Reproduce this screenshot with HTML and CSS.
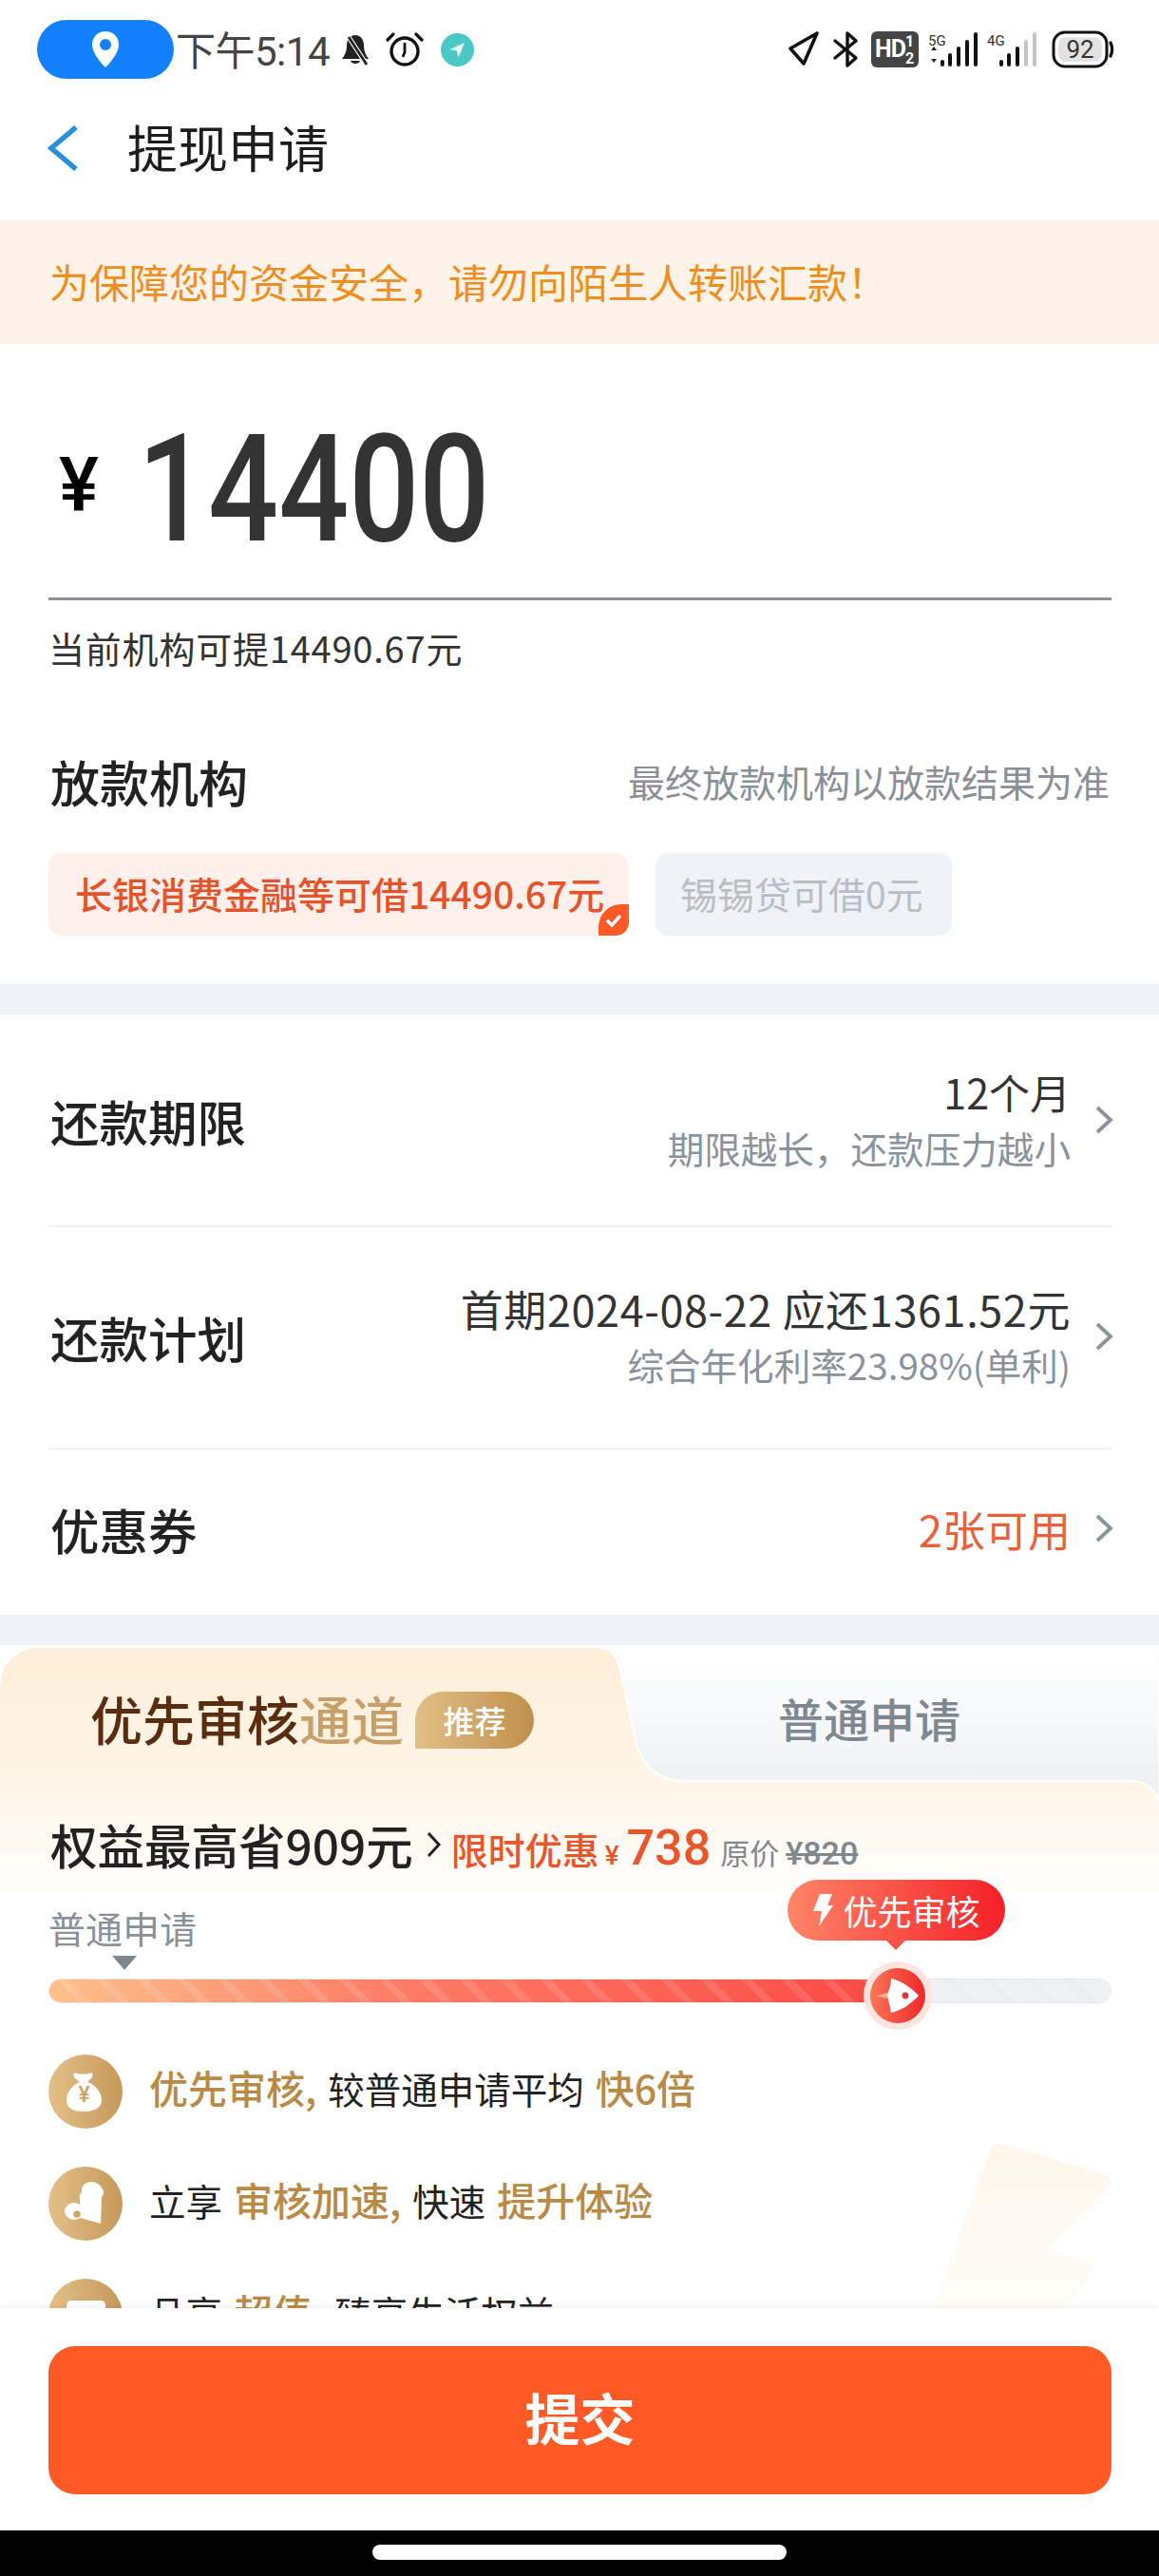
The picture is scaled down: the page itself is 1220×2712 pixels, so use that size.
FILE: index.html
```html
<!DOCTYPE html>
<html lang="zh-CN">
<head>
    <meta charset="UTF-8">
    <meta name="viewport" content="width=device-width, initial-scale=1.0">
    <title>提现申请</title>
    <link rel="stylesheet" href="styles.css">
</head>
<body>
<div class="page">

    <div class="scroll-area">

        <!-- Status bar -->
        <div class="status-bar">
            <div class="loc-pill">
                <svg width="30" height="40" viewBox="0 0 30 40"><path d="M15 1C7 1 1 7 1 15c0 9 9 19 14 24 5-5 14-15 14-24C29 7 23 1 15 1z" fill="#fff"/><circle cx="15" cy="15" r="6" fill="#1380ff"/></svg>
            </div>
            <span class="status-time">下午5:14</span>
            <svg class="st-bell" width="28" height="33" viewBox="0 0 28 33"><path d="M14 1c-6 0-9 5-9 11 0 6-2 10-5 14h28c-3-4-5-8-5-14 0-6-3-11-9-11z" fill="#222"/><path d="M9 28c1 4 9 4 10 0z" fill="#222"/><path d="M5 0l21 32" stroke="#fff" stroke-width="5"/><path d="M7 3l19 29" stroke="#222" stroke-width="2.8"/></svg>
            <svg class="st-alarm" width="40" height="36" viewBox="0 0 40 36"><circle cx="20" cy="20" r="14" fill="none" stroke="#111" stroke-width="3.4"/><path d="M20 11v10l-2 5" fill="none" stroke="#111" stroke-width="2.8"/><path d="M2 8l6-6M38 8l-6-6" stroke="#111" stroke-width="3.2" stroke-linecap="round"/></svg>
            <svg class="st-send" width="35" height="35" viewBox="0 0 35 35"><circle cx="17.5" cy="17.5" r="17.5" fill="#4bc8c6"/><path d="M25 10L9.5 17l7 1.6 2 7z" fill="#e8fbfa"/></svg>
            <svg class="status-right" width="344" height="40" viewBox="0 0 344 40">
                <path d="M31 3L3 19l14 16z" fill="none" stroke="#111" stroke-width="3.6" stroke-linejoin="round"/>
                <path d="M50 11l22 18-9 8V3l9 8-22 18" fill="none" stroke="#111" stroke-width="3.4" stroke-linejoin="round" stroke-linecap="round"/>
                <rect x="88" y="1" width="50" height="38" rx="6" fill="#444"/>
                <text x="92" y="28" class="sb-hd">HD</text>
                <text x="124" y="17" class="sb-hd-sm">1</text>
                <text x="124" y="35" class="sb-hd-sm">2</text>
                <text x="148" y="16" class="sb-net">5G</text>
                <path d="M151 21l3-4 3 4zM151 30l3 4 3-4z" fill="#222"/>
                <rect x="161" y="31" width="4" height="7" rx="2" fill="#111"/>
                <rect x="169" y="24" width="4" height="14" rx="2" fill="#111"/>
                <rect x="178" y="17" width="4" height="21" rx="2" fill="#111"/>
                <rect x="187" y="10" width="4" height="28" rx="2" fill="#111"/>
                <rect x="196" y="2" width="4" height="36" rx="2" fill="#111"/>
                <text x="210" y="16" class="sb-net">4G</text>
                <rect x="223" y="31" width="4" height="7" rx="2" fill="#111"/>
                <rect x="231" y="24" width="4" height="14" rx="2" fill="#111"/>
                <rect x="240" y="17" width="4" height="21" rx="2" fill="#111"/>
                <rect x="249" y="10" width="4" height="28" rx="2" fill="#c4c4c4"/>
                <rect x="258" y="2" width="4" height="36" rx="2" fill="#c4c4c4"/>
                <rect x="280" y="2" width="56" height="36" rx="12" fill="#fff" stroke="#111" stroke-width="3"/>
                <rect x="285" y="7" width="46" height="26" rx="8" fill="#e2e2e2"/>
                <text x="308" y="29" class="sb-batt">92</text>
                <path d="M340 13c2 4 2 10 0 14" fill="none" stroke="#111" stroke-width="3.4" stroke-linecap="round"/>
            </svg>
        </div>

        <!-- Header -->
        <div class="nav-bar">
            <svg width="32" height="48" viewBox="0 0 32 48"><path d="M30 2L4 24l26 22" fill="none" stroke="#2a8fdc" stroke-width="5.5"/></svg>
            <span class="nav-title">提现申请</span>
        </div>

        <div class="notice">为保障您的资金安全，请勿向陌生人转账汇款！</div>

        <!-- Amount + lender -->
        <div class="amount-card">
            <div class="amount-row">
                <span class="amount-yen">¥</span>
                <span class="amount-num">14400</span>
            </div>
            <div class="amount-hint">当前机构可提14490.67元</div>
            <div class="org-head">
                <span class="org-title">放款机构</span>
                <span class="org-note">最终放款机构以放款结果为准</span>
            </div>
            <div class="chips">
                <div class="chip chip-on">
                    长银消费金融等可借14490.67元
                    <span class="chip-check">
                        <svg width="20" height="18" viewBox="0 0 20 18"><path d="M3 9l5 5 9-10" fill="none" stroke="#fff" stroke-width="3.6"/></svg>
                    </span>
                </div>
                <div class="chip chip-off">锡锡贷可借0元</div>
            </div>
        </div>

        <div class="band"></div>

        <!-- Terms -->
        <div class="terms">
            <div class="term-row term-period">
                <span class="term-label">还款期限</span>
                <div class="term-value">
                    <div class="term-main">12个月</div>
                    <div class="term-sub">期限越长，还款压力越小</div>
                </div>
                <svg class="chev" width="20" height="32" viewBox="0 0 20 32"><path d="M3 3l14 13L3 29" fill="none" stroke="#8a929c" stroke-width="3.8"/></svg>
            </div>
            <div class="term-row term-plan">
                <span class="term-label">还款计划</span>
                <div class="term-value">
                    <div class="term-main">首期2024-08-22 应还1361.52元</div>
                    <div class="term-sub">综合年化利率23.98%(单利)</div>
                </div>
                <svg class="chev" width="20" height="32" viewBox="0 0 20 32"><path d="M3 3l14 13L3 29" fill="none" stroke="#8a929c" stroke-width="3.8"/></svg>
            </div>
            <div class="term-row term-coupon">
                <span class="term-label">优惠券</span>
                <div class="term-value">
                    <div class="term-main term-hot">2张可用</div>
                </div>
                <svg class="chev" width="20" height="32" viewBox="0 0 20 32"><path d="M3 3l14 13L3 29" fill="none" stroke="#8a929c" stroke-width="3.8"/></svg>
            </div>
        </div>

        <div class="band"></div>

        <!-- Priority channel panel -->
        <div class="panel">
            <svg class="tab-shape" width="1220" height="170" viewBox="0 0 1220 170">
                <defs>
                    <linearGradient id="tabGrey" x1="0" y1="0" x2="0" y2="1">
                        <stop offset="0" stop-color="#ffffff"/>
                        <stop offset="0.85" stop-color="#eff2f5"/>
                    </linearGradient>
                </defs>
                <path d="M630 0C642 0 649 8 652 20L668 92C674 124 692 140 722 140H1192C1208 140 1214 150 1220 160V0Z" fill="url(#tabGrey)" stroke="#fff" stroke-width="2"/>
            </svg>
            <svg class="panel-bolt" width="200" height="180" viewBox="0 0 200 180">
                <defs>
                    <linearGradient id="boltFill" x1="0" y1="0" x2="0" y2="1">
                        <stop offset="0" stop-color="#fef6ea"/>
                        <stop offset="1" stop-color="#fffdf9"/>
                    </linearGradient>
                </defs>
                <path d="M62 8C64 2 68 0 74 1L182 33C190 36 192 42 186 48L122 113L163 125C170 128 172 134 167 140L140 176H2Z" fill="url(#boltFill)"/>
            </svg>

            <div class="tabs">
                <div class="tab-active">
                    <span class="tab-dark">优先审核</span><span class="tab-gold">通道</span>
                    <span class="tab-badge">推荐</span>
                </div>
                <div class="tab-plain">普通申请</div>
            </div>

            <div class="save-row">
                <span class="save-title">权益最高省909元</span>
                <svg class="save-chev" width="16" height="30" viewBox="0 0 16 30"><path d="M2 3l11 12L2 27" fill="none" stroke="#222" stroke-width="3"/></svg>
                <span class="save-label">限时优惠</span>
                <span class="save-yen">¥</span>
                <span class="save-price">738</span>
                <span class="save-old">原价</span>
                <span class="save-strike">¥820</span>
            </div>

            <div class="slider">
                <div class="slider-label">普通申请</div>
                <div class="slider-mark"></div>
                <div class="track">
                    <div class="track-fill" style="width: 79%"></div>
                    <div class="tip">
                        <svg width="22" height="34" viewBox="0 0 22 34"><path d="M8 0h13l-5 12h6L7 34l3-16H1z" fill="#fff"/></svg>
                        优先审核
                    </div>
                    <svg class="thumb" width="72" height="72" viewBox="-36 -36 72 72">
                        <defs>
                            <linearGradient id="thumbFill" x1="0" y1="0" x2="1" y2="0">
                                <stop offset="0" stop-color="#fb7558"/>
                                <stop offset="1" stop-color="#f0282a"/>
                            </linearGradient>
                        </defs>
                        <circle r="36" fill="#fde5df"/>
                        <circle r="29" fill="url(#thumbFill)"/>
                        <path d="M-23 0L-11 -3V3Z" fill="#fff" opacity="0.45"/>
                        <path d="M22 0C14-9 3-16-7-18-7-10-10-5-11 0-10 5-8 11-7 18 3 16 14 9 22 0Z" fill="#fff"/>
                        <circle cx="8" cy="0" r="3.4" fill="#d83a30"/>
                    </svg>
                </div>
            </div>

            <div class="perks">
                <div class="perk">
                    <span class="perk-icon">
                        <svg width="78" height="78" viewBox="0 0 78 78"><path d="M28 19c3 2 14 2 17 0 2 1 2 4 0 6l-4 4c9 3 15 11 15 19 0 8-7 12-19 12s-18-4-18-12c0-8 6-16 14-19l-5-4c-2-2-2-5 0-6z" fill="#fff"/><text x="37.5" y="50" class="perk-glyph">¥</text></svg>
                    </span>
                    <div class="perk-text"><span class="gold">优先审核,</span><span>较普通申请平均</span><span class="gold">快6倍</span></div>
                </div>
                <div class="perk">
                    <span class="perk-icon">
                        <svg width="78" height="78" viewBox="0 0 78 78"><path d="M45 16c-7 0-11 5-10 11-2 2-3 4-2 7l1 20 21 6 1-28c2-2 3-6 1-8-2-5-7-8-12-8z" fill="#fff"/><ellipse cx="27" cy="47" rx="10" ry="9" fill="#fff"/><circle cx="30" cy="50" r="3.6" fill="#cfa263"/></svg>
                    </span>
                    <div class="perk-text"><span>立享</span><span class="gold">审核加速,</span><span>快速</span><span class="gold">提升体验</span></div>
                </div>
                <div class="perk">
                    <span class="perk-icon">
                        <svg width="78" height="78" viewBox="0 0 78 78"><rect x="19" y="23" width="41" height="36" rx="5" fill="#fff"/><text x="39.5" y="48" class="perk-glyph">¥</text></svg>
                    </span>
                    <div class="perk-text"><span>品享</span><span class="gold">超值,</span><span>臻享生活权益</span></div>
                </div>
            </div>
        </div>
    </div>

    <!-- Submit -->
    <div class="footer">
        <div class="submit">提交</div>
    </div>
    <div class="home-bar"><span class="home-pill"></span></div>
</div>
</body>
</html>
```

FILE: styles.css
```css
/* Page frame */
body {
    margin: 0;
    background: #fff;
    font-family: "Noto Sans CJK SC", "Noto Sans", sans-serif;
    color: #222;
}

.page {
    display: flex;
    flex-direction: column;
    width: 1220px;
    height: 2712px;
    overflow: hidden;
}

.scroll-area {
    flex: 1;
    min-height: 0;
    overflow: hidden;
}

/* Status bar */
.status-bar {
    display: flex;
    align-items: center;
    height: 62px;
    padding: 21px 47px 9px 39px;
}

.loc-pill {
    display: flex;
    align-items: center;
    justify-content: center;
    width: 144px;
    height: 62px;
    background: #1380ff;
    border-radius: 31px;
}

.status-time {
    margin-left: 2px;
    margin-top: -3px;
    font-family: Roboto, "Noto Sans CJK SC", sans-serif;
    font-size: 42px;
    color: #444;
    letter-spacing: -0.5px;
}

.st-bell { margin-left: 13px; }
.st-alarm { margin-left: 18px; }
.st-send { margin-left: 18px; }
.status-right { margin-left: auto; }

.sb-hd { font: 700 25px Roboto, sans-serif; fill: #fff; letter-spacing: -1px; }
.sb-hd-sm { font: 700 16px Roboto, sans-serif; fill: #fff; }
.sb-net { font: 400 15px Roboto, sans-serif; fill: #333; }
.sb-batt { font: 400 26px Roboto, sans-serif; fill: #333; text-anchor: middle; }

/* Header */
.nav-bar {
    display: flex;
    align-items: center;
    height: 128px;
    padding: 0 0 12px 50px;
}

.nav-title {
    margin-top: -5px;
    margin-left: 52px;
    font-size: 53px;
    color: #1d1d1d;
}

.notice {
    height: 130px;
    line-height: 128px;
    padding-left: 52px;
    background: #fdf3e8;
    font-size: 42px;
    color: #ee8e20;
}

/* Amount card */
.amount-card {
    padding: 0 50px 51px 51px;
}

.amount-row {
    display: flex;
    align-items: center;
    height: 237px;
    padding-top: 30px;
    border-bottom: 3px solid #8c8f94;
}

.amount-yen {
    margin-left: 11px;
    font: 500 79px Roboto, sans-serif;
    color: #000;
}

.amount-num {
    display: inline-block;
    margin-top: 8px;
    margin-left: 41px;
    font: 500 158px/1 Roboto, sans-serif;
    color: #333;
    transform: scaleX(0.825);
    transform-origin: left center;
}

.amount-hint {
    margin-top: 27px;
    height: 46px;
    line-height: 46px;
    font-size: 38px;
    letter-spacing: 0.8px;
    color: #333;
}

.org-head {
    display: flex;
    align-items: center;
    justify-content: space-between;
    height: 50px;
    margin-top: 92px;
    padding: 0 2px;
}

.org-title {
    font-size: 52px;
    font-weight: 500;
    color: #222;
}

.org-note {
    font-size: 39px;
    color: #8b8f96;
}

.chips {
    display: flex;
    gap: 28px;
    margin-top: 51px;
}

.chip {
    position: relative;
    height: 87px;
    line-height: 85px;
    border-radius: 14px;
    font-size: 39px;
}

.chip-on {
    width: 611px;
    padding-left: 28px;
    box-sizing: border-box;
    background: #fff0ec;
    color: #e5532a;
    font-weight: 500;
}

.chip-off {
    width: 312px;
    padding-left: 26px;
    box-sizing: border-box;
    background: #eff2f6;
    color: #b9bdc5;
}

.chip-check {
    position: absolute;
    right: 0;
    bottom: 0;
    display: flex;
    align-items: center;
    justify-content: center;
    width: 32px;
    height: 33px;
    background: #ff5a26;
    border-radius: 24px 0 14px 0;
}

.band {
    height: 32px;
    background: #eff2f6;
}

/* Term rows */
.terms {
    padding: 0 50px 0 51px;
}

.term-row {
    display: flex;
    align-items: center;
    border-bottom: 2px solid #f0f1f3;
    box-sizing: border-box;
}

.term-period { height: 224px; }
.term-plan { height: 234px; padding-bottom: 2px; }
.term-coupon { height: 174px; padding-bottom: 8px; border-bottom: none; }

.term-label {
    margin-left: 2px;
    font-size: 51.5px;
    font-weight: 500;
    color: #222;
}

.term-value {
    flex: 1;
    text-align: right;
}

.term-main {
    line-height: 59px;
    font-size: 45px;
    color: #333;
}

.term-period .term-main { font-size: 43px; }
.term-plan .term-main { letter-spacing: 0.6px; }

.term-sub {
    line-height: 59px;
    font-size: 38.6px;
    color: #8a929c;
}

.term-hot { color: #e9603a; }

.chev {
    margin-left: 25px;
    margin-right: -2px;
}

/* Priority panel */
.panel {
    position: relative;
    height: 700px;
    margin-top: 3px;
    background: linear-gradient(#fdeed8, #fff6e9 150px, #ffffff 265px);
    border-top-left-radius: 40px;
}

.tab-shape {
    position: absolute;
    top: 0;
    left: 0;
}

.panel-bolt {
    position: absolute;
    top: 521px;
    left: 980px;
}

.tabs {
    position: relative;
    display: flex;
    align-items: center;
    height: 154px;
    padding-bottom: 8px;
    box-sizing: border-box;
}

.tab-active {
    display: flex;
    align-items: center;
    width: 819px;
    padding-left: 95px;
    box-sizing: border-box;
    font-size: 55px;
    font-weight: 500;
}

.tab-dark { color: #5a2c10; }
.tab-gold { color: #c89f69; }

.tab-badge {
    display: flex;
    align-items: center;
    justify-content: center;
    width: 125px;
    height: 60px;
    margin-top: 6px;
    margin-left: 12px;
    background: linear-gradient(90deg, #e2bf87, #c08f4c);
    border-radius: 30px 30px 30px 0;
    font-size: 33px;
    color: #fff;
}

.tab-plain {
    font-size: 48px;
    font-weight: 500;
    color: #7f8790;
}

.save-row {
    position: relative;
    display: flex;
    align-items: baseline;
    height: 50px;
    margin-top: 28px;
    padding-left: 53px;
    line-height: 50px;
}

.save-title {
    font-size: 49.5px;
    font-weight: 500;
    color: #222;
}

.save-chev {
    align-self: center;
    margin-left: 14px;
}

.save-label {
    margin-left: 10px;
    font-size: 39px;
    font-weight: 500;
    color: #e9562c;
}

.save-yen {
    margin-left: 6px;
    font: 500 28px/50px Roboto, sans-serif;
    color: #e9562c;
}

.save-price {
    margin-left: 8px;
    font: 500 52px/50px Roboto, sans-serif;
    color: #e9562c;
}

.save-old {
    margin-left: 10px;
    font-size: 31px;
    color: #7f8790;
}

.save-strike {
    margin-left: 7px;
    font: 500 34px/50px Roboto, sans-serif;
    color: #7f8790;
    text-decoration: line-through;
}

/* Progress slider */
.slider {
    position: relative;
    margin: 45px 50px 0 51px;
}

.slider-label {
    height: 40px;
    line-height: 34px;
    font-size: 39px;
    color: #8a909a;
}

.slider-mark {
    width: 0;
    height: 0;
    margin: 7px 0 9px 67px;
    border-left: 13px solid transparent;
    border-right: 13px solid transparent;
    border-top: 15px solid #7f8692;
}

.track {
    position: relative;
    height: 26px;
    box-sizing: border-box;
    border: 1px solid #e6e9ee;
    border-radius: 13px;
    background:
        repeating-linear-gradient(45deg, transparent 0 22px, rgba(200, 206, 214, 0.1) 22px 30px),
        #eff2f5;
}

.track-fill {
    height: 100%;
    border-radius: 13px 0 0 13px;
    background:
        repeating-linear-gradient(45deg, transparent 0 22px, rgba(255, 255, 255, 0.12) 22px 30px),
        linear-gradient(90deg, #ffc08c, #ff7e68 40%, #fb4a45);
}

.tip {
    position: absolute;
    top: -105px;
    left: 777px;
    display: flex;
    align-items: center;
    justify-content: center;
    gap: 10px;
    width: 229px;
    height: 64px;
    background: linear-gradient(90deg, #ff8467, #f52028);
    border-radius: 32px;
    font-size: 36px;
    color: #fff;
}

.tip::after {
    content: "";
    position: absolute;
    top: 62px;
    left: 102px;
    border-left: 12px solid transparent;
    border-right: 12px solid transparent;
    border-top: 12px solid #f8534a;
}

.thumb {
    position: absolute;
    top: -19px;
    left: 857px;
}

/* Perk list */
.perks {
    position: relative;
    display: flex;
    flex-direction: column;
    gap: 40px;
    margin: 54px 0 0 51px;
}

.perk {
    display: flex;
    align-items: center;
    height: 78px;
}

.perk-icon {
    width: 78px;
    height: 78px;
    border-radius: 50%;
    background: linear-gradient(90deg, #e3c088, #c6985a);
}

.perk-glyph {
    font: 500 23px Roboto, sans-serif;
    fill: #cfa263;
    text-anchor: middle;
}

.perk-text {
    display: flex;
    align-items: baseline;
    gap: 12px;
    margin-top: -11px;
    margin-left: 28px;
    font-size: 38.5px;
    color: #222;
}

.gold {
    font-size: 41px;
    font-weight: 500;
    color: #b98a45;
}

/* Footer */
.footer {
    position: relative;
    height: 234px;
    padding: 40px 50px 0 51px;
    box-sizing: border-box;
    background: #fff;
    box-shadow: 0 -2px 6px rgba(0, 0, 0, 0.05);
}

.submit {
    height: 156px;
    line-height: 148px;
    background: #ff5a26;
    border-radius: 28px;
    text-align: center;
    font-size: 58px;
    font-weight: 700;
    color: #fff;
}

.home-bar {
    display: flex;
    justify-content: center;
    height: 48px;
    padding-top: 15px;
    box-sizing: border-box;
    background: #000;
}

.home-pill {
    width: 436px;
    height: 16px;
    border-radius: 8px;
    background: #fff;
}
```
